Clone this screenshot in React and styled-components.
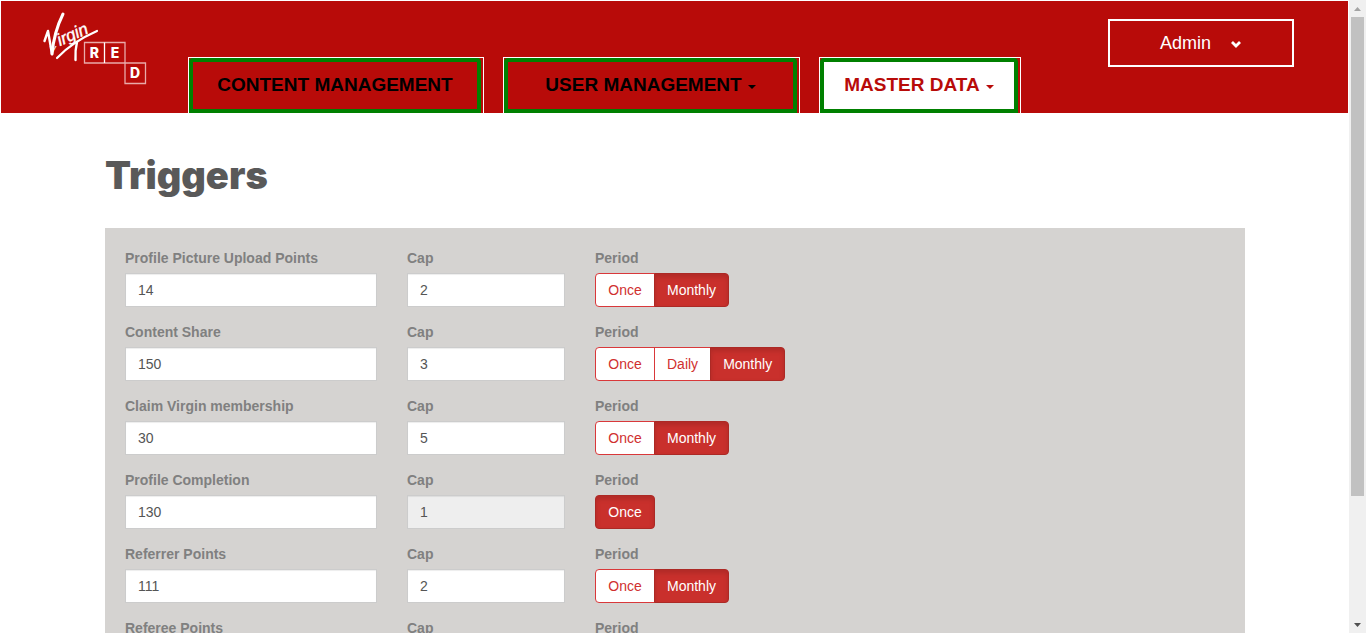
import React, { useState } from "react";
import styled, { createGlobalStyle } from "styled-components";

const RED = "#b80b09";

const GlobalStyle = createGlobalStyle`
  *, *::before, *::after { box-sizing: border-box; }
  body {
    margin: 0;
    background: #fff;
    color: #555;
    font: 14px/20px "Liberation Sans", Arial, sans-serif;
  }
  button, input { font: inherit; }
`;

const Shell = styled.div`
  display: flex;
  height: 100vh;
  overflow: hidden;
`;

const Page = styled.div`
  flex: 1;
  min-width: 0;
  padding: 1px 0 0 1px;
  overflow: hidden;
`;

const Header = styled.header`
  display: flex;
  align-items: flex-start;
  height: 112px;
  margin-right: 1px;
  padding-right: 54px;
  background: ${RED};
`;

const LogoLink = styled.a`
  display: block;
  width: 187px;
  flex: none;
  padding: 8px 0 0 39px;

  svg { display: block; }
`;

const Nav = styled.nav`
  display: flex;
  align-self: flex-end;
  gap: 19px;
`;

const TabFrame = styled.div`
  padding-right: 2px;
  border: 1px solid #fff;
  border-bottom: 0;
`;

const Tab = styled.a`
  display: flex;
  align-items: center;
  justify-content: center;
  gap: 6px;
  width: ${(p) => p.$width}px;
  height: 55px;
  padding-bottom: 2px;
  border: 4px solid green;
  border-radius: 4px 4px 0 0;
  background: ${(p) => (p.$active ? "#fff" : "transparent")};
  color: ${(p) => (p.$active ? RED : "#000")};
  font-size: 19px;
  font-weight: bold;
  text-decoration: none;
  white-space: nowrap;
`;

const Caret = styled.span`
  margin-top: 4px;
  border: 4px solid transparent;
  border-top-color: currentColor;
  border-bottom: 0;
`;

const AdminButton = styled.button`
  display: flex;
  align-items: center;
  justify-content: center;
  gap: 19px;
  width: 186px;
  height: 48px;
  margin: 18px 0 0 auto;
  padding: 0;
  border: 2px solid #fff;
  background: transparent;
  color: #fff;
  font-size: 18px;
`;

const Container = styled.main`
  max-width: 1140px;
  margin: 0 auto;
`;

const Title = styled.h1`
  margin: 42px 0 33px;
  color: #595959;
  font: 900 38px/40px "Arial Black", Inter, sans-serif;
`;

const Panel = styled.form`
  padding: 20px;
  background: #d5d3d1;
`;

const Row = styled.div`
  display: grid;
  grid-template-columns: 252px 158px 1fr;
  column-gap: 30px;
  margin-bottom: 15px;
`;

const Field = styled.div`
  display: flex;
  flex-direction: column;
  gap: 5px;
`;

const labelStyle = `
  color: #808080;
  font-weight: bold;
`;

const Label = styled.label`${labelStyle}`;
const Caption = styled.span`${labelStyle}`;

const TextInput = styled.input`
  width: 100%;
  height: 34px;
  padding: 6px 12px;
  border: 1px solid #ccc;
  border-radius: 0;
  background: #fff;
  box-shadow: inset 0 1px 1px rgba(0, 0, 0, 0.075);
  color: #555;

  &:disabled { background: #eee; opacity: 1; }
`;

const ButtonGroup = styled.div`
  display: flex;
`;

const Choice = styled.button`
  position: relative;
  height: 34px;
  padding: 6px 12px;
  border: 1px solid #d9383a;
  background: #fff;
  color: #d0302f;

  & + & { margin-left: -1px; }
  &:first-child {
    min-width: 60px;
    border-top-left-radius: 4px;
    border-bottom-left-radius: 4px;
  }
  &:last-child { border-top-right-radius: 4px; border-bottom-right-radius: 4px; }
  &[aria-pressed="true"] {
    border-color: #ac2925;
    background: #c9302c;
    box-shadow: inset 0 3px 5px rgba(0, 0, 0, 0.125);
    color: #fff;
  }
`;

const ScrollTrack = styled.div`
  display: flex;
  flex-direction: column;
  align-items: center;
  width: 17px;
  flex: none;
  background: #f0f0f0;
`;

const ScrollArrow = styled.svg`
  display: block;
  width: 17px;
  height: 17px;
  flex: none;
`;

const ScrollThumb = styled.div`
  width: 13px;
  height: 80%;
  background: #c1c1c1;
`;

const ScrollLane = styled.div`
  display: flex;
  flex: 1;
  width: 100%;
  justify-content: center;
`;

function Logo() {
  return (
    <svg width="110" height="80" viewBox="40 9 110 80" aria-hidden="true">
      <g fill="#fff" fontFamily="Liberation Sans Narrow, Liberation Sans, Arial, sans-serif" fontStyle="italic">
        <text fontSize="10" x="49" y="54">V</text>
        <text
          fontFamily="Liberation Sans, Arial, sans-serif"
          fontSize="17"
          stroke="#fff"
          strokeWidth="0.400"
          transform="translate(60 46) rotate(-24)"
        >
          irgin
        </text>
      </g>
      <g fill="none" stroke="#fff" strokeLinecap="round" strokeLinejoin="round">
        <path d="M52 54Q54 32 63 14" strokeWidth="3" />
        <path d="M44.500 41L48 31L52 54" strokeWidth="2.400" />
        <path d="M57 58Q72 42 97 31" strokeWidth="2.200" />
        <path d="M77 42Q75 50 75.500 60" strokeWidth="2.400" />
      </g>
      <g fill="none" stroke="#e9aaa9" strokeWidth="1.300">
        <path d="M84.500 42.500H125V63H84.500Z" />
        <path d="M104.500 42.500V63" stroke="#fff" />
        <path d="M125 63H145.500V83.500H125Z" />
      </g>
      <g fill="#fff" fontFamily="Inter, sans-serif" fontWeight="800" fontSize="14" textAnchor="middle">
        <text x="94.500" y="58">R</text>
        <text x="115" y="58">E</text>
        <text x="135" y="78">D</text>
      </g>
    </svg>
  );
}

const TABS = [
  { label: "CONTENT MANAGEMENT", width: 292 },
  { label: "USER MANAGEMENT", width: 293, menu: true },
  { label: "MASTER DATA", width: 198, menu: true, active: true },
];

const TRIGGERS = [
  { label: "Profile Picture Upload Points", points: "14", cap: "2", periods: ["Once", "Monthly"], period: "Monthly" },
  { label: "Content Share", points: "150", cap: "3", periods: ["Once", "Daily", "Monthly"], period: "Monthly" },
  { label: "Claim Virgin membership", points: "30", cap: "5", periods: ["Once", "Monthly"], period: "Monthly" },
  { label: "Profile Completion", points: "130", cap: "1", capLocked: true, periods: ["Once"], period: "Once" },
  { label: "Referrer Points", points: "111", cap: "2", periods: ["Once", "Monthly"], period: "Monthly" },
  { label: "Referee Points", points: "", cap: "", periods: ["Once", "Monthly"], period: "Monthly" },
];

function TriggerRow({ trigger, index }) {
  const [period, setPeriod] = useState(trigger.period);
  return (
    <Row>
      <Field>
        <Label htmlFor={`points-${index}`}>{trigger.label}</Label>
        <TextInput id={`points-${index}`} type="text" defaultValue={trigger.points} />
      </Field>
      <Field>
        <Label htmlFor={`cap-${index}`}>Cap</Label>
        <TextInput id={`cap-${index}`} type="text" defaultValue={trigger.cap} disabled={trigger.capLocked} />
      </Field>
      <Field>
        <Caption id={`period-${index}`}>Period</Caption>
        <ButtonGroup role="group" aria-labelledby={`period-${index}`}>
          {trigger.periods.map((name) => (
            <Choice key={name} type="button" aria-pressed={name === period} onClick={() => setPeriod(name)}>
              {name}
            </Choice>
          ))}
        </ButtonGroup>
      </Field>
    </Row>
  );
}

export default function App() {
  return (
    <>
      <GlobalStyle />
      <Shell>
        <Page>
          <Header>
            <LogoLink href="#" aria-label="Virgin Red">
              <Logo />
            </LogoLink>
            <Nav>
              {TABS.map((tab) => (
                <TabFrame key={tab.label}>
                  <Tab href="#" $width={tab.width} $active={tab.active}>
                    {tab.label}
                    {tab.menu && <Caret />}
                  </Tab>
                </TabFrame>
              ))}
            </Nav>
            <AdminButton type="button">
              Admin
              <svg width="12" height="9" viewBox="0 0 12 9" aria-hidden="true">
                <path d="M2 3L6 7L10 3" fill="none" stroke="#fff" strokeWidth="2.800" />
              </svg>
            </AdminButton>
          </Header>
          <Container>
            <Title>Triggers</Title>
            <Panel>
              {TRIGGERS.map((trigger, index) => (
                <TriggerRow key={trigger.label} trigger={trigger} index={index} />
              ))}
            </Panel>
          </Container>
        </Page>
        <ScrollTrack aria-hidden="true">
          <ScrollArrow viewBox="0 0 17 17">
            <path d="M5 11L8.500 7L12 11Z" fill="#a3a3a3" />
          </ScrollArrow>
          <ScrollLane>
            <ScrollThumb />
          </ScrollLane>
          <ScrollArrow viewBox="0 0 17 17">
            <path d="M5 7L8.500 11L12 7Z" fill="#505050" />
          </ScrollArrow>
        </ScrollTrack>
      </Shell>
    </>
  );
}
